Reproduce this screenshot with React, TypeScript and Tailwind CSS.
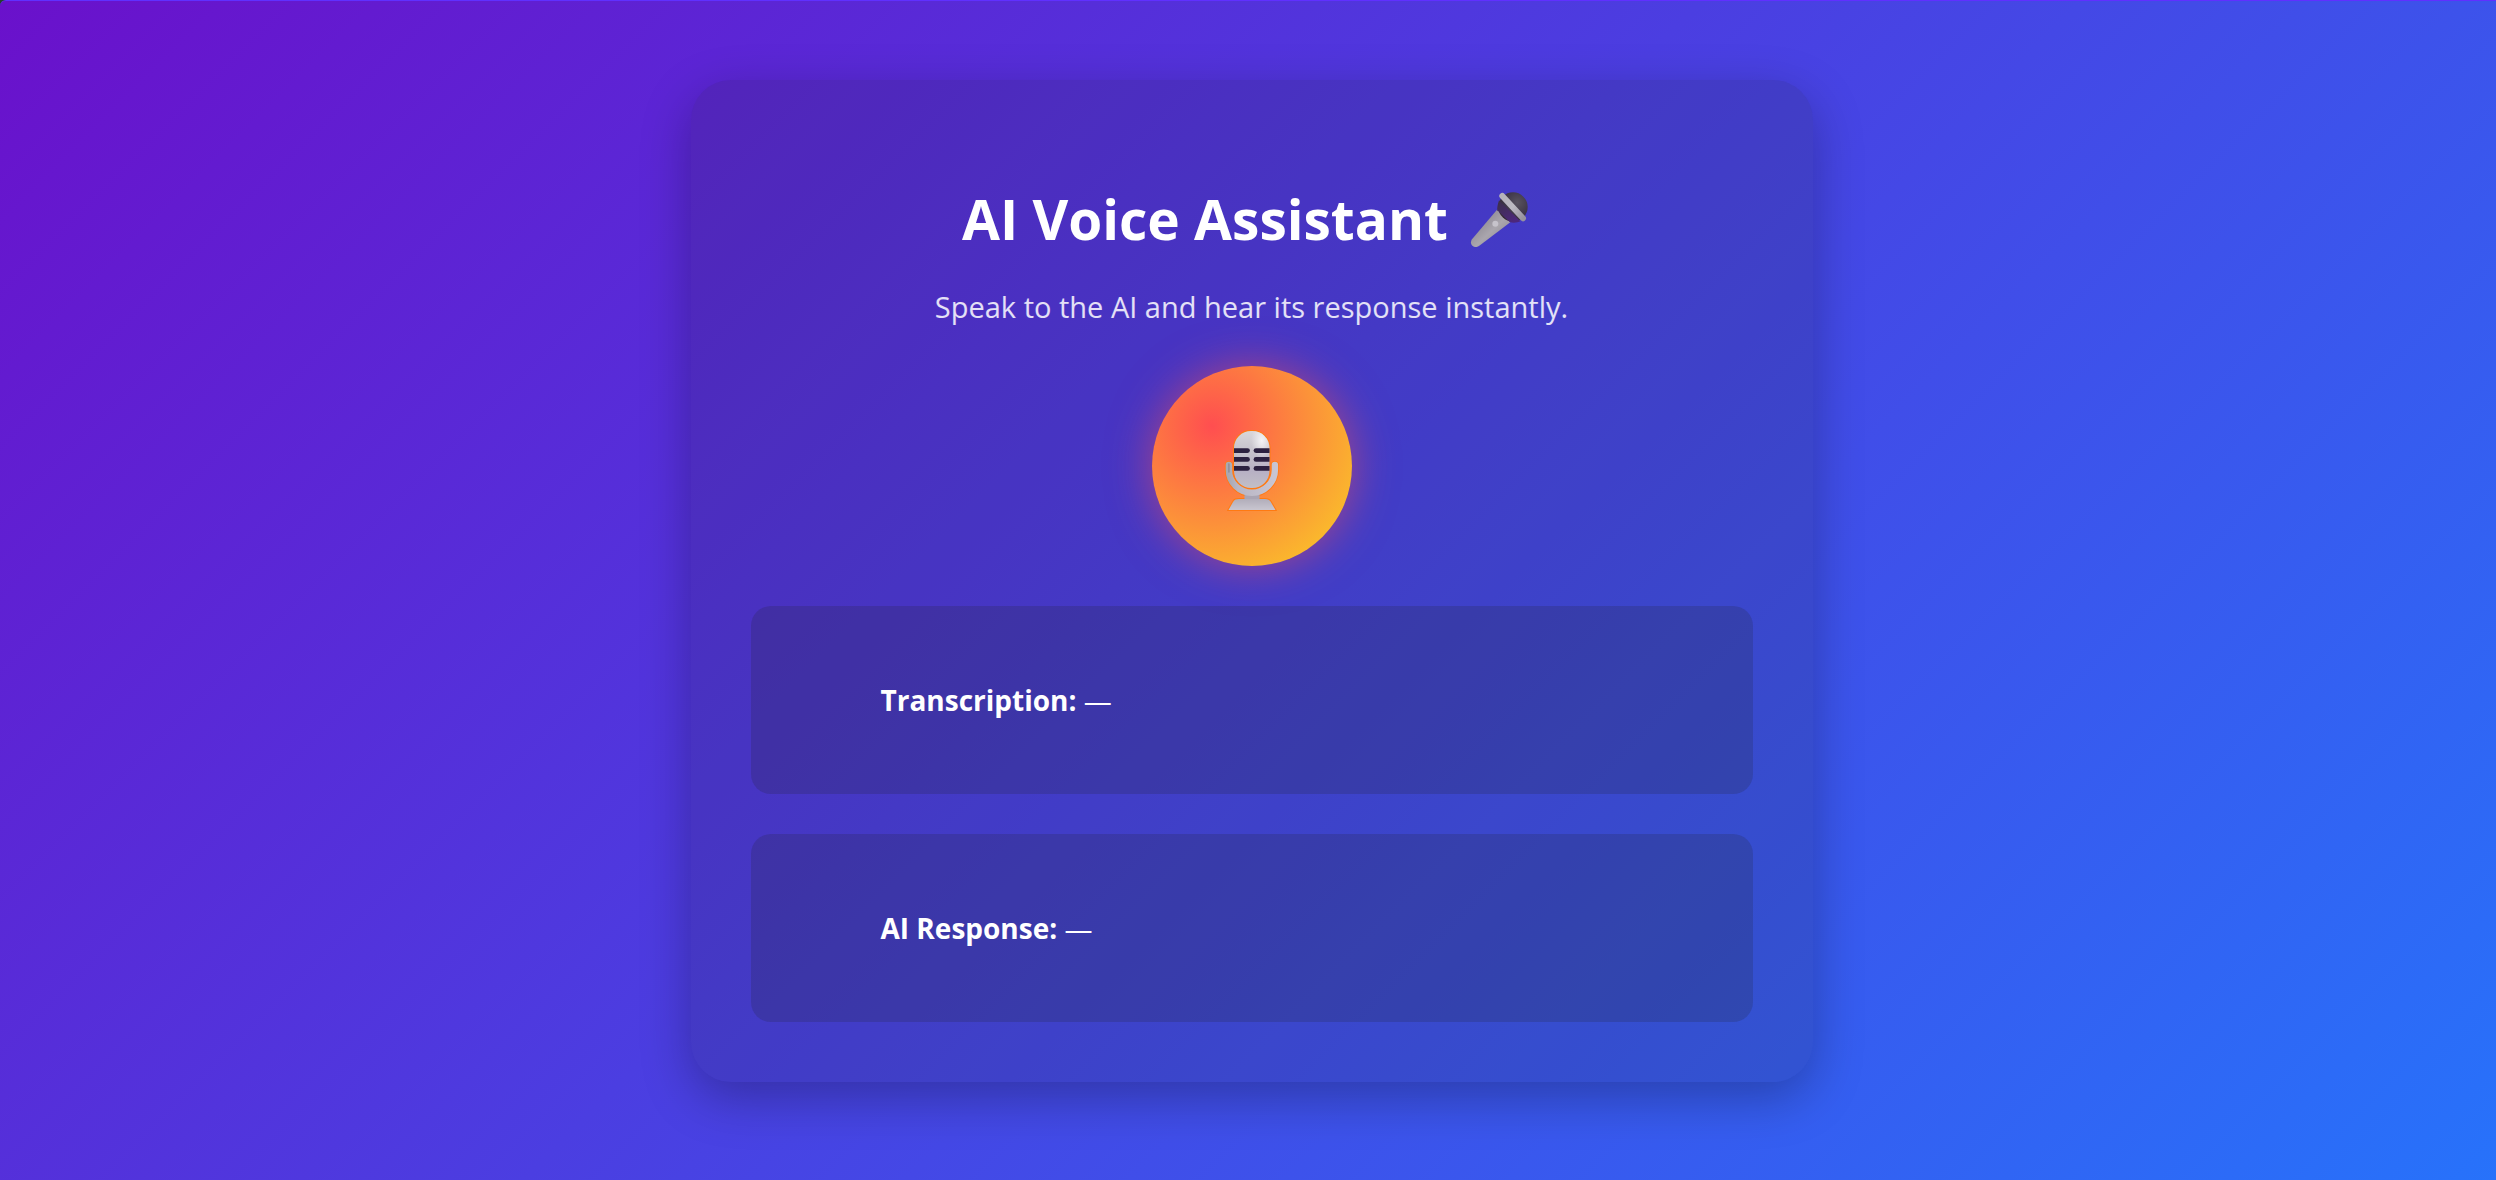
function HandMicrophone() {
  return (
    <svg viewBox="60 36 177 171" className="h-[57px] w-[59px]" role="img" aria-label="Microphone">
      <defs>
        <linearGradient id="handle" x1="0" y1="0" x2="1" y2="1">
          <stop offset="0.2" stopColor="#8a8590" />
          <stop offset="0.55" stopColor="#aaa6ad" />
          <stop offset="1" stopColor="#85808a" />
        </linearGradient>
        <radialGradient id="head" cx="0.65" cy="0.35" r="0.7">
          <stop offset="0" stopColor="#59535f" />
          <stop offset="0.6" stopColor="#3f3748" />
          <stop offset="1" stopColor="#352b35" />
        </radialGradient>
        <linearGradient id="collar" x1="0" y1="0" x2="0.6" y2="1">
          <stop offset="0" stopColor="#3c3147" />
          <stop offset="1" stopColor="#4c277c" />
        </linearGradient>
        <linearGradient id="band" x1="0" y1="0" x2="1" y2="1">
          <stop offset="0" stopColor="#b5b2b9" />
          <stop offset="0.5" stopColor="#bdbac2" />
          <stop offset="1" stopColor="#96929d" />
        </linearGradient>
      </defs>
      <path d="M141 92 66 181C58 192 66 205 80 204Q84 203 88 200L181 130Z" fill="url(#handle)" />
      <circle cx="189" cy="84" r="44" fill="url(#head)" />
      <path d="M147 64C142 79 141 88 142 94L180 130C190 133 205 131 211 127Z" fill="url(#collar)" />
      <path d="M157 51 219 118" stroke="url(#band)" strokeWidth="18" strokeLinecap="round" />
      <circle cx="136" cy="134" r="9" fill="#c6c3cb" />
    </svg>
  );
}

function StudioMicrophone() {
  return (
    <svg viewBox="0 0 84 100" className="h-[100px] w-[84px]" aria-hidden="true">
      <defs>
        <linearGradient id="capsule" x1="0" y1="0" x2="0" y2="1">
          <stop offset="0" stopColor="#d9d7da" />
          <stop offset="0.3" stopColor="#c9c5ce" />
          <stop offset="0.7" stopColor="#b7b0c4" />
          <stop offset="1" stopColor="#c2bfc6" />
        </linearGradient>
        <radialGradient id="shine" cx="0.78" cy="0.17" r="0.3">
          <stop offset="0" stopColor="#f4f3f5" />
          <stop offset="1" stopColor="#f4f3f5" stopOpacity="0" />
        </radialGradient>
        <linearGradient id="arm" x1="0" y1="0" x2="1" y2="0">
          <stop offset="0" stopColor="#aaa8b2" />
          <stop offset="0.2" stopColor="#b9b6c4" />
          <stop offset="1" stopColor="#c8c5d2" />
        </linearGradient>
        <linearGradient id="base" x1="0" y1="0" x2="0" y2="1">
          <stop offset="0" stopColor="#b1adba" />
          <stop offset="1" stopColor="#c9c6d0" />
        </linearGradient>
      </defs>
      <g fill="none" stroke="#ff7a12" strokeWidth="2">
        <rect x="24" y="15" width="35.5" height="57" rx="17" />
        <path d="M25.5 83.5Q27 83 29 83H55Q59 83 60.5 85.5L65.5 94H18.5L23 86Q24 84 25.5 83.5Z" />
      </g>
      <path d="M18.9 49V53.8A23 23 0 0 0 64.9 53.8V49" fill="none" stroke="#ff7a12" strokeWidth="8" strokeLinecap="round" />
      <rect x="34.5" y="78" width="15" height="7" fill="#aaa5b3" />
      <path d="M18.9 49V53.8A23 23 0 0 0 64.9 53.8V49" fill="none" stroke="url(#arm)" strokeWidth="6.4" strokeLinecap="round" />
      <path d="M18.9 48V56" stroke="#908d98" strokeWidth="1.5" strokeLinecap="round" />
      <path d="M25.5 83.5Q27 83 29 83H55Q59 83 60.5 85.5L65.5 94H18.5L23 86Q24 84 25.5 83.5Z" fill="url(#base)" />
      <rect x="24" y="15" width="35.5" height="57" rx="17" fill="url(#capsule)" />
      <rect x="24" y="15" width="35.5" height="57" rx="17" fill="url(#shine)" />
      <g fill="#2c2040">
        <path d="M24 32.2H37.5A2.4 2.4 0 0 1 37.5 37H24Z" />
        <path d="M24 41H37.5A2.4 2.4 0 0 1 37.5 45.8H24Z" />
        <path d="M24 50H37.5A2.4 2.4 0 0 1 37.5 54.8H24Z" />
        <path d="M59.5 32.2H46A2.4 2.4 0 0 0 46 37H59.5Z" />
        <path d="M59.5 41H46A2.4 2.4 0 0 0 46 45.8H59.5Z" />
        <path d="M59.5 50H46A2.4 2.4 0 0 0 46 54.8H59.5Z" />
      </g>
    </svg>
  );
}

function Panel({ label, value }: { label: string; value: string }) {
  return (
    <section className="rounded-[20px] bg-[#222222]/18 px-[130px] py-[74px]">
      <p className="text-[28px] leading-[40px]">
        <strong className="font-bold">{label}</strong> {value}
      </p>
    </section>
  );
}

export default function App() {
  return (
    <div className="bg-[#26402c]">
      <main className="flex min-h-screen items-start justify-center rounded-tl-md border-t border-[#6030ff] bg-[linear-gradient(135deg,#6a11cb,#2575fc_103%)] pt-[79px] pb-[100px] pl-[7px] font-['Open_Sans','Noto_Sans',sans-serif] text-white">
        <div className="flex w-full max-w-[1122px] flex-col rounded-[40px] bg-[#1e1e1e]/14 p-[60px] shadow-[0_16px_50px_rgba(0,0,0,0.27)]">
          <h1 className="mt-[39px] flex items-center justify-center gap-[22px] pr-3 text-[55px] leading-[80px] font-bold">
            AI Voice Assistant
            <HandMicrophone />
          </h1>
          <p className="mt-7 text-center text-[29px] leading-[40px] text-white/85">
            Speak to the AI and hear its response instantly.
          </p>
          <button
            type="button"
            aria-label="Start recording"
            className="mt-[39px] flex size-[200px] items-center justify-center self-center rounded-full bg-[radial-gradient(circle_at_30%_30%,#ff4e50,#f9d423)] shadow-[0_0_44px_rgba(255,78,80,0.55)]"
          >
            <StudioMicrophone />
          </button>
          <div className="mt-10 flex flex-col gap-10">
            <Panel label="Transcription:" value="—" />
            <Panel label="AI Response:" value="—" />
          </div>
        </div>
      </main>
    </div>
  );
}
